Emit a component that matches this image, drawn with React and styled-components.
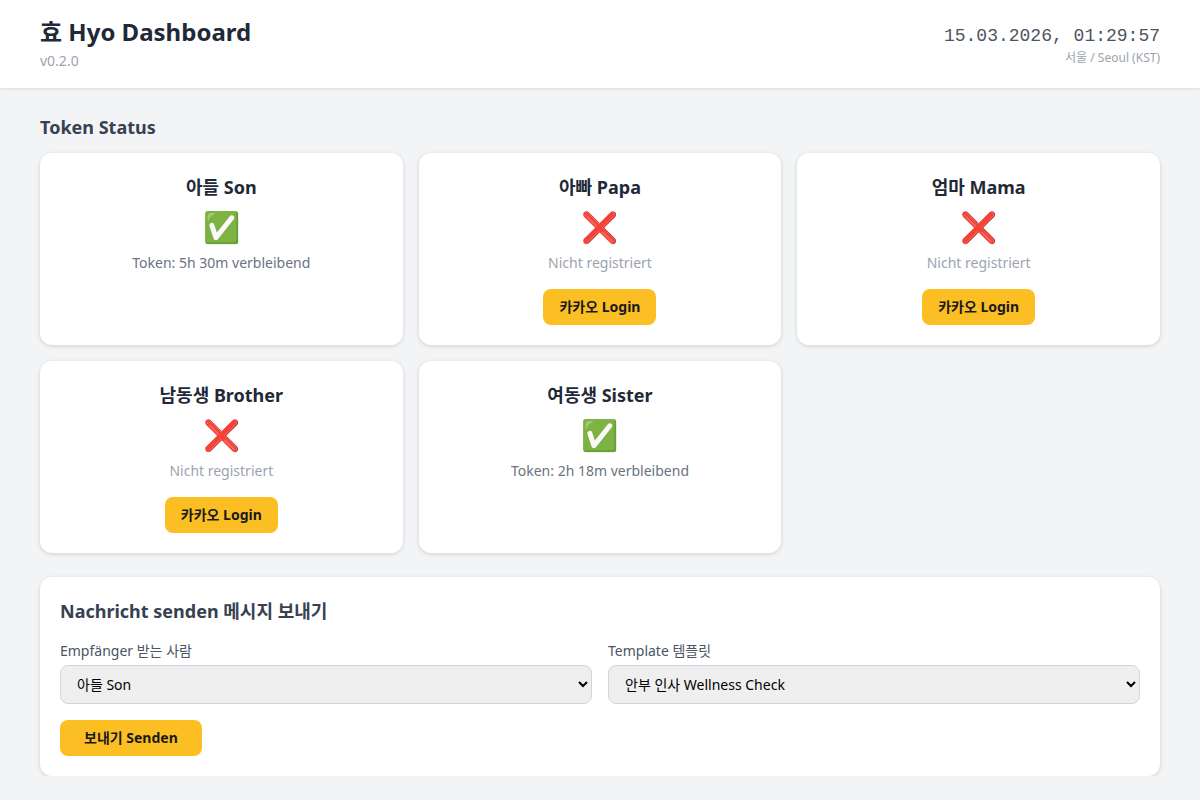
import React from 'react';
import styled, { createGlobalStyle } from 'styled-components';

const GlobalStyle = createGlobalStyle`
    * { box-sizing: border-box; }
    body {
        margin: 0;
        background: #f3f4f6;
        color: #1f2937;
        font-family: "Noto Sans", "Noto Sans CJK KR", sans-serif;
    }
`

const members = [
    { name: '아들 Son', ok: true, text: 'Token: 5h 30m verbleibend' },
    { name: '아빠 Papa', ok: false },
    { name: '엄마 Mama', ok: false },
    { name: '남동생 Brother', ok: false },
    { name: '여동생 Sister', ok: true, text: 'Token: 2h 18m verbleibend' },
];

const App = () => {
    return (
        <>
            <GlobalStyle />
            <Header>
                <div>
                    <Title>효 Hyo Dashboard</Title>
                    <Version>v0.2.0</Version>
                </div>
                <Clock>
                    <ClockTime>15.03.2026, 01:29:57</ClockTime>
                    <ClockZone>서울 / Seoul (KST)</ClockZone>
                </Clock>
            </Header>
            <Main>
                <SectionTitle>Token Status</SectionTitle>
                <CardGrid>
                    {members.map(m => (
                        <Card key={m.name}>
                            <CardName>{m.name}</CardName>
                            <StatusIcon>{m.ok ? '✅' : '❌'}</StatusIcon>
                            <StatusText $muted={!m.ok}>{m.ok ? m.text : 'Nicht registriert'}</StatusText>
                            {!m.ok && <LoginButton>카카오 Login</LoginButton>}
                        </Card>
                    ))}
                </CardGrid>
                <SendPanel>
                    <PanelTitle>Nachricht senden 메시지 보내기</PanelTitle>
                    <FormRow>
                        <Field>
                            <FieldLabel>Empfänger 받는 사람</FieldLabel>
                            <Select defaultValue="son">
                                <option value="son">아들 Son</option>
                                <option value="papa">아빠 Papa</option>
                                <option value="mama">엄마 Mama</option>
                                <option value="brother">남동생 Brother</option>
                                <option value="sister">여동생 Sister</option>
                            </Select>
                        </Field>
                        <Field>
                            <FieldLabel>Template 템플릿</FieldLabel>
                            <Select defaultValue="wellness">
                                <option value="wellness">안부 인사 Wellness Check</option>
                            </Select>
                        </Field>
                    </FormRow>
                    <SendButton>보내기 Senden</SendButton>
                </SendPanel>
            </Main>
        </>
    );
};

export default App;

const Header = styled.header`
    height: 88px;
    background: #fff;
    box-shadow: 0 1px 3px rgba(0, 0, 0, .1);
    padding: 15px 40px;
    display: flex;
    justify-content: space-between;
    align-items: flex-start;
`

const Title = styled.h1`
    margin: 0;
    font-size: 24px;
    line-height: 33px;
    font-weight: 700;
    color: #1f2937;
`

const Version = styled.div`
    font-size: 14px;
    line-height: 19px;
    margin-top: 3px;
    color: #9ca3af;
`

const Clock = styled.div`
    text-align: right;
    padding-top: 11px;
`

const ClockTime = styled.div`
    font-family: "Liberation Mono", monospace;
    font-size: 18px;
    line-height: 21px;
    color: #4b5563;
`

const ClockZone = styled.div`
    font-size: 12px;
    line-height: 16px;
    margin-top: 3px;
    color: #9ca3af;
`

const Main = styled.main`
    padding: 27px 40px 0;
`

const SectionTitle = styled.h2`
    margin: 0 0 13px;
    font-size: 18px;
    line-height: 25px;
    font-weight: 700;
    color: #374151;
`

const CardGrid = styled.div`
    display: grid;
    grid-template-columns: repeat(3, 1fr);
    gap: 16px;
`

const Card = styled.div`
    height: 192px;
    background: #fff;
    border-radius: 12px;
    box-shadow: 0 1px 4px rgba(0, 0, 0, .15);
    padding: 20px;
    display: flex;
    flex-direction: column;
    align-items: center;
`

const CardName = styled.div`
    font-size: 18px;
    line-height: 28px;
    font-weight: 700;
    color: #1f2937;
`

const StatusIcon = styled.div`
    font-size: 30px;
    line-height: 44px;
    margin-top: 4px;
`

const StatusText = styled.div`
    font-size: 14px;
    line-height: 19px;
    margin-top: 4px;
    color: ${props => props.$muted ? '#9ca3af' : '#6b7280'};
`

const LoginButton = styled.button`
    margin-top: 17px;
    height: 36px;
    padding: 0 16px 2px;
    border: none;
    border-radius: 8px;
    background: #fbbf24;
    color: #1a1a1a;
    font: 700 14px "Noto Sans", "Noto Sans CJK KR", sans-serif;
`

const SendPanel = styled.section`
    margin-top: 24px;
    background: #fff;
    border-radius: 12px;
    box-shadow: 0 1px 4px rgba(0, 0, 0, .15);
    padding: 20px;
`

const PanelTitle = styled.h2`
    margin: 0 0 16px;
    font-size: 18px;
    line-height: 28px;
    font-weight: 700;
    color: #374151;
`

const FormRow = styled.div`
    display: grid;
    grid-template-columns: 1fr 1fr;
    gap: 16px;
`

const Field = styled.div`
    display: flex;
    flex-direction: column;
`

const FieldLabel = styled.label`
    font-size: 14px;
    line-height: 19px;
    margin-bottom: 5px;
    color: #4b5563;
`

const Select = styled.select`
    height: 39px;
    padding: 0 12px;
    border: 1px solid #d1d5db;
    border-radius: 8px;
    font: 14px "Noto Sans", "Noto Sans CJK KR", sans-serif;
`

const SendButton = styled(LoginButton)`
    display: block;
    margin-top: 16px;
    padding: 0 24px 2px;
`
